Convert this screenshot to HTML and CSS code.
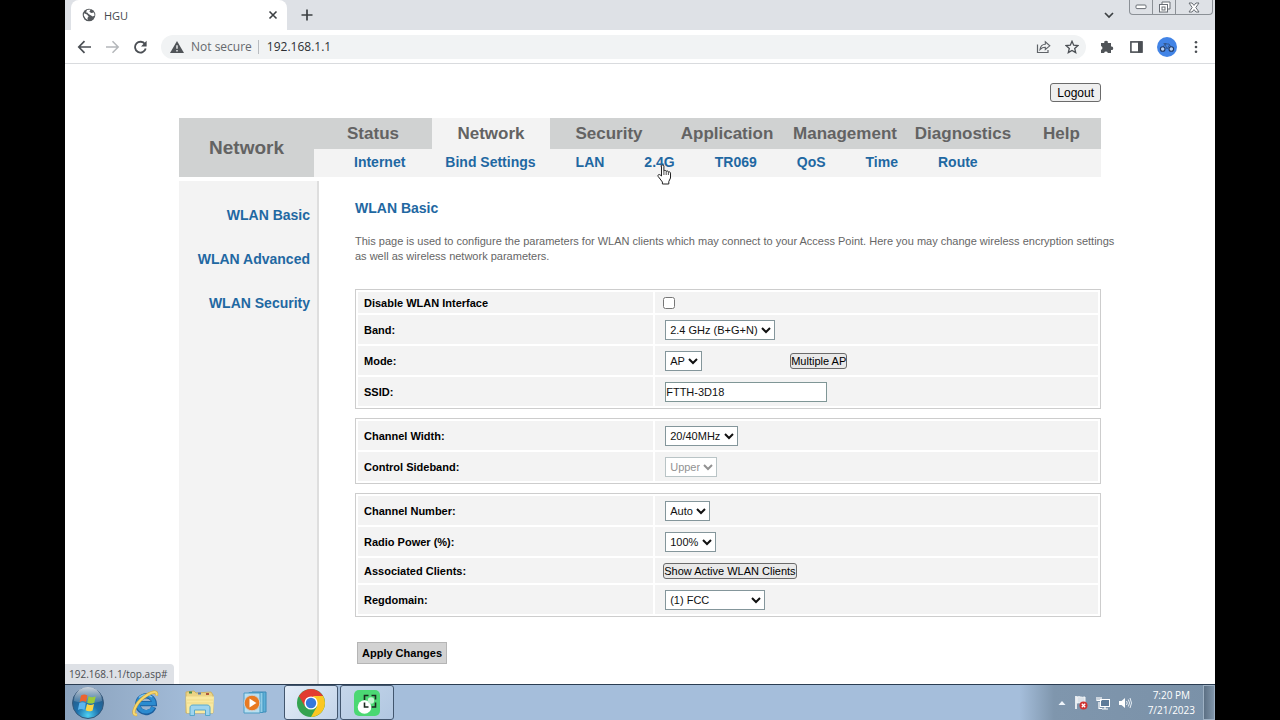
FILE: index.html
```html
<!DOCTYPE html>
<html lang="en">
<head>
    <meta charset="UTF-8">
    <meta name="viewport" content="width=device-width, initial-scale=1.0">
    <title>HGU</title>
    <link rel="stylesheet" href="styles.css">
</head>
<body>
    <div class="desktop">
        <!-- Tab strip -->
        <div class="tab-strip">
            <div class="tab">
                <svg width="14" height="14" viewBox="0 0 14 14"><circle cx="7" cy="7" r="6.3" fill="#54585c"/><path d="M2 5.2L5 6.6 6.6 8.4 5.4 10 5.8 12 3.6 10.6 1.8 7.6zM5 2L8.6 1.6 7.4 3.8 9.2 5 12 4.4 12.6 7.6 10.8 8.4 8.6 7.2 6.6 6 5.2 4.6 4 4.4z" fill="#fff"/></svg>
                <span class="tab-title">HGU</span>
                <button class="icon-btn" aria-label="Close tab">
                    <svg width="10" height="10" viewBox="0 0 10 10"><path d="M1.5 1.5l7 7M8.5 1.5l-7 7" stroke="#3c4043" stroke-width="1.6"/></svg>
                </button>
            </div>
            <button class="icon-btn new-tab" aria-label="New tab">
                <svg width="12" height="12" viewBox="0 0 12 12"><path d="M6 .5v11M.5 6h11" stroke="#3c4043" stroke-width="1.7"/></svg>
            </button>
            <button class="icon-btn tab-search" aria-label="Search tabs">
                <svg width="10" height="8" viewBox="0 0 10 8"><path d="M1 2l4 4 4-4" fill="none" stroke="#3c4043" stroke-width="1.7"/></svg>
            </button>
            <div class="window-buttons">
                <button aria-label="Minimize"><svg width="12" height="6" viewBox="0 0 12 6"><rect x="1" y="1" width="10" height="3.6" rx="1" fill="#fff" stroke="#696e75"/></svg></button>
                <button aria-label="Restore"><svg width="13" height="12" viewBox="0 0 13 12"><path d="M4 3V1h8v7h-2" fill="#fff" stroke="#696e75"/><rect x="1.5" y="3.5" width="8" height="7.5" fill="#fff" stroke="#696e75"/><rect x="4" y="6" width="3" height="3" fill="none" stroke="#696e75"/></svg></button>
                <button class="close" aria-label="Close"><svg width="12" height="11" viewBox="0 0 12 11"><path d="M1 1h3l2 2.4L8 1h3L7.8 5.500 11 10H8L6 7.6 4 10H1l3.2-4.5z" fill="#fff" stroke="#696e75"/></svg></button>
            </div>
        </div>

        <!-- Toolbar -->
        <div class="toolbar">
            <button class="icon-btn" aria-label="Back"><svg width="15" height="14" viewBox="0 0 15 14"><path d="M14 7H2M7.5 1.2L1.8 7l5.7 5.8" fill="none" stroke="#4b4f54" stroke-width="1.7"/></svg></button>
            <button class="icon-btn" aria-label="Forward"><svg width="15" height="14" viewBox="0 0 15 14"><path d="M1 7h12M7.5 1.2L13.2 7l-5.7 5.8" fill="none" stroke="#b4b7ba" stroke-width="1.5"/></svg></button>
            <button class="icon-btn" aria-label="Reload"><svg width="15" height="14" viewBox="0 0 15 14"><path d="M12 4.200A5.400 5.400 0 1 0 12.700 8.500" fill="none" stroke="#4b4f54" stroke-width="1.8"/><path d="M13.6.8v5.7H8z" fill="#4b4f54"/></svg></button>
            <div class="omnibox">
                <svg width="14" height="12" viewBox="0 0 14 12"><path d="M7 0l7 12H0z" fill="#505458"/><path d="M7 4.200v3.600M7 9v1.500" stroke="#f1f3f4" stroke-width="1.4"/></svg>
                <span class="not-secure">Not secure</span>
                <input type="text" class="address" aria-label="Address" value="192.168.1.1">
                <button class="icon-btn" aria-label="Share"><svg width="15" height="14" viewBox="0 0 15 14"><path d="M1.5 4.500v8h10.500V10" fill="none" stroke="#5f6368" stroke-width="1.2"/><path d="M4 9.500C4.500 6 6.500 4.300 9.300 4.200V1.800L13.800 5.800 9.300 9.500V7.200C7 7.200 5.400 8 4 9.500z" fill="none" stroke="#5f6368" stroke-width="1.1"/></svg></button>
                <button class="icon-btn" aria-label="Bookmark"><svg width="14" height="14" viewBox="0 0 14 14"><path d="M7 1.300l1.700 3.900 4.200.4-3.200 2.800 1 4.200L7 10.400l-3.700 2.200 1-4.200L1.100 5.600l4.200-.4z" fill="none" stroke="#4b4f54" stroke-width="1.3"/></svg></button>
            </div>
            <button class="icon-btn" aria-label="Extensions"><svg width="15" height="14" viewBox="0 0 15 14"><path d="M2 3h3.300a1.800 1.800 0 1 1 3.500 0H12v3.500a1.800 1.800 0 1 1 0 3.500v3H8.800a1.900 1.900 0 0 0-3.700 0H2V9.800a1.900 1.900 0 0 0 0-3.700z" fill="#505458"/></svg></button>
            <button class="icon-btn" aria-label="Side panel"><svg width="17" height="14" viewBox="0 0 17 14"><rect x="3.900" y="1.900" width="11" height="10.200" fill="#fff" stroke="#4b4f54" stroke-width="1.600"/><path d="M11 1.500h4.500v11H11z" fill="#4b4f54"/></svg></button>
            <button class="icon-btn" aria-label="Profile"><svg width="20" height="20" viewBox="0 0 20 20"><circle cx="10" cy="10" r="10" fill="#4284e6"/><path d="M5.500 11L8 7h4l3 4.500M8 7l2 5 2.500-4M6.500 6.500h3" fill="none" stroke="#31507f" stroke-width=".8"/><circle cx="5.7" cy="12" r="2.3" fill="#b5d0f5" stroke="#213963" stroke-width="1.1"/><circle cx="14.300" cy="12" r="2.3" fill="#b5d0f5" stroke="#213963" stroke-width="1.1"/></svg></button>
            <button class="icon-btn" aria-label="Menu"><svg width="12" height="14" viewBox="0 0 12 14"><g fill="#4b4f54"><circle cx="6" cy="2.200" r="1.300"/><circle cx="6" cy="7" r="1.300"/><circle cx="6" cy="11.800" r="1.300"/></g></svg></button>
        </div>

        <!-- Router page -->
        <div class="page">
            <div class="wrapper">
                <div class="top-bar">
                    <button class="logout">Logout</button>
                </div>

                <div class="header">
                    <div class="section-name">Network</div>
                    <div class="menus">
                        <nav class="main-menu">
                            <a href="#">Status</a>
                            <a href="#" class="active">Network</a>
                            <a href="#">Security</a>
                            <a href="#">Application</a>
                            <a href="#">Management</a>
                            <a href="#">Diagnostics</a>
                            <a href="#" class="last">Help</a>
                        </nav>
                        <nav class="sub-menu">
                            <a href="#">Internet</a>
                            <a href="#">Bind Settings</a>
                            <a href="#">LAN</a>
                            <a href="#">2.4G<svg class="pointer" width="16" height="21" viewBox="0 0 16 21"><path d="M4.500 12V2.200c0-1.800 2.400-1.800 2.400 0V7c.5-1 2.200-.8 2.300.4.700-.8 2.100-.4 2.200.7.800-.6 2.100-.1 2.100 1V14l-1.700 3.500V20H5.400v-2L1.200 12.500C.3 11 2 9.800 3.200 11z" fill="#fff" stroke="#222"/><path d="M6.900 7v4M9.200 7.500V11M11.400 8.200V11" stroke="#222" stroke-width=".8"/></svg></a>
                            <a href="#">TR069</a>
                            <a href="#">QoS</a>
                            <a href="#">Time</a>
                            <a href="#">Route</a>
                        </nav>
                    </div>
                </div>

                <div class="main">
                    <nav class="sidebar">
                        <a href="#">WLAN Basic</a>
                        <a href="#">WLAN Advanced</a>
                        <a href="#">WLAN Security</a>
                    </nav>

                    <div class="content">
                        <h1>WLAN Basic</h1>
                        <p class="intro">This page is used to configure the parameters for WLAN clients which may connect to your Access Point. Here you may change wireless encryption settings<br>as well as wireless network parameters.</p>

                        <table class="settings">
                            <tr class="short">
                                <th><label for="disable">Disable WLAN Interface</label></th>
                                <td><input type="checkbox" id="disable"></td>
                            </tr>
                            <tr>
                                <th><label for="band">Band:</label></th>
                                <td><select id="band"><option>2.4 GHz (B+G+N)</option></select></td>
                            </tr>
                            <tr>
                                <th><label for="mode">Mode:</label></th>
                                <td><select id="mode"><option>AP</option></select><button class="small-btn multiple">Multiple AP</button></td>
                            </tr>
                            <tr>
                                <th><label for="ssid">SSID:</label></th>
                                <td><input type="text" id="ssid" value="FTTH-3D18"></td>
                            </tr>
                        </table>

                        <table class="settings">
                            <tr>
                                <th><label for="width">Channel Width:</label></th>
                                <td><select id="width"><option>20/40MHz</option></select></td>
                            </tr>
                            <tr>
                                <th><label for="sideband">Control Sideband:</label></th>
                                <td><select id="sideband" disabled><option>Upper</option></select></td>
                            </tr>
                        </table>

                        <table class="settings">
                            <tr>
                                <th><label for="channel">Channel Number:</label></th>
                                <td><select id="channel"><option>Auto</option></select></td>
                            </tr>
                            <tr>
                                <th><label for="power">Radio Power (%):</label></th>
                                <td><select id="power"><option>100%</option></select></td>
                            </tr>
                            <tr class="medium">
                                <th><label for="clients">Associated Clients:</label></th>
                                <td><button class="small-btn" id="clients">Show Active WLAN Clients</button></td>
                            </tr>
                            <tr>
                                <th><label for="regdomain">Regdomain:</label></th>
                                <td><select id="regdomain" class="wide"><option>(1) FCC</option></select></td>
                            </tr>
                        </table>

                        <button class="apply">Apply Changes</button>
                    </div>
                </div>
            </div>
            <div class="status-bubble">192.168.1.1/top.asp#</div>
        </div>

        <!-- Taskbar -->
        <div class="taskbar">
            <button class="task start" aria-label="Start">
                <svg width="34" height="34" viewBox="0 0 34 34">
                    <defs>
                        <radialGradient id="orb" cx=".5" cy=".9" r=".9"><stop offset="0" stop-color="#4fd2f3"/><stop offset=".4" stop-color="#1d72ad"/><stop offset="1" stop-color="#2b4f75"/></radialGradient>
                        <linearGradient id="shine" x1="0" y1="0" x2="0" y2="1"><stop offset="0" stop-color="#fff" stop-opacity=".75"/><stop offset="1" stop-color="#fff" stop-opacity=".1"/></linearGradient>
                    </defs>
                    <circle cx="17" cy="17" r="15.500" fill="url(#orb)" stroke="#36587a"/>
                    <path d="M3 15a14 14 0 0 1 28 0c-9 3-18 3-28 0z" fill="url(#shine)"/>
                    <path d="M10 9.500c2.600-1.400 4.400-1.100 6.400.1l-1.400 6.400c-2-1.200-4.100-1.300-6.400-.1z" fill="#ed6430"/>
                    <path d="M17.600 10.300c2.400 1.200 4.600 1.200 7.200-.1l-1.500 6.500c-2.400 1.200-4.700 1.200-7.100 0z" fill="#9bcb3c"/>
                    <path d="M8.300 17.100c2.300-1.200 4.400-.9 6.500.2L13.400 24c-2-1.300-4.300-1.200-6.500-.1z" fill="#5db5ee"/>
                    <path d="M16 18c2.400 1.300 4.700 1.300 7 .1l-1.400 6.300c-2.400 1.200-4.700 1.200-7-.1z" fill="#fcd444"/>
                </svg>
            </button>
            <button class="task" aria-label="Internet Explorer">
                <svg width="28" height="28" viewBox="0 0 28 28"><path d="M22.800 18.200A8.300 8.300 0 1 1 23.300 14.600H9" fill="none" stroke="#1c5f9e" stroke-width="5.200"/><path d="M22.200 18.200A8.100 8.100 0 1 1 23 14.500H9" fill="none" stroke="#2b8bd0" stroke-width="3.600"/><path d="M8 8.500a9.500 9.500 0 0 1 13-.5" fill="none" stroke="#7cc2ee" stroke-width="1.500"/><path d="M6 25.500C-1 27 4.500 14.500 12.500 8.500S27 1 25.500 6.500" fill="none" stroke="#d2a83a" stroke-width="3.200"/><path d="M6 25.500C-1 27 4.500 14.500 12.500 8.500S27 1 25.500 6.500" fill="none" stroke="#f5d770" stroke-width="2"/></svg>
            </button>
            <button class="task" aria-label="Windows Explorer">
                <svg width="30" height="28" viewBox="0 0 30 28"><path d="M1 3l8-1 2 2 15-1 2 3v18H1z" fill="#ecd484" stroke="#cdb263"/><path d="M4 3.500h3" stroke="#3f8a4c" stroke-width="2"/><path d="M13 4.500h3" stroke="#5b76a8" stroke-width="2"/><path d="M21 5h3" stroke="#b0563c" stroke-width="2"/><path d="M1 7.500h28L28 24H2z" fill="#f9e9a0"/><path d="M2 11h26M2 14h26" stroke="#efd987"/><path d="M5 26.500V19c0-2 1-3 3-3h14c2 0 3 1 3 3v7.500h-4.500V21h-11v5.500z" fill="#9ed4ee" stroke="#57a7cb"/></svg>
            </button>
            <button class="task" aria-label="Media Player">
                <svg width="26" height="26" viewBox="0 0 26 26"><path d="M10 2h14v20H10z" fill="#5eb1d8" stroke="#3c8ab7"/><path d="M7 2.500h14v20H7z" fill="#8fcde8" stroke="#4294bf"/><path d="M2 3h16v20H2z" fill="#b8dff0" stroke="#4d9cc4"/><circle cx="10" cy="13" r="7.800" fill="#e97a21" stroke="#c9cfd3"/><path d="M7.500 8.500l7 4.500-7 4.500z" fill="#fff"/></svg>
            </button>
            <button class="task open" aria-label="Chrome">
                <svg width="30" height="30" viewBox="0 0 30 30"><circle cx="15" cy="15" r="14" fill="#34a350"/><path d="M15 15L2.900 8A14 14 0 0 1 27.100 8z" fill="#e23c30"/><path d="M2.900 8L9 18.500 15 8.500z" fill="#e23c30"/><path d="M27.100 8A14 14 0 0 1 15 29l6-10.500L17 8z" fill="#fbc722"/><circle cx="15" cy="15" r="6.600" fill="#fff"/><circle cx="15" cy="15" r="5.200" fill="#3478dc"/></svg>
            </button>
            <button class="task open" aria-label="Screen recorder">
                <svg width="28" height="28" viewBox="0 0 28 28"><rect x="1" y="1" width="26" height="26" rx="5" fill="#4bd873"/><path d="M11.500 11V6.500H15.500M18.500 6.500H22.500V10.500M22.500 13.500V18h-4" fill="none" stroke="#1b2b20" stroke-width="1.600"/><circle cx="11.500" cy="18" r="6.800" fill="#fff"/><circle cx="18" cy="11.500" r="3.200" fill="#c4f3d1"/><path d="M11.500 13.500V18H15.500" fill="none" stroke="#1b2b20" stroke-width="1.600"/></svg>
            </button>
            <div class="tray">
                <svg width="8" height="6" viewBox="0 0 8 6"><path d="M4 1l3.500 4h-7z" fill="#eef4fa"/></svg>
                <svg width="14" height="15" viewBox="0 0 14 15"><path d="M2 1v13" stroke="#fff" stroke-width="1.6"/><path d="M3 2c3-1 4 1 8 0v6c-4 1-5-1-8 0z" fill="#dce3ea" stroke="#f6f8fa"/><circle cx="9.500" cy="10.500" r="4" fill="#cf3331"/><path d="M7.800 8.800l3.400 3.400M11.200 8.800l-3.400 3.400" stroke="#fff" stroke-width="1.3"/></svg>
                <svg width="14" height="14" viewBox="0 0 14 14"><rect x="4.500" y="3.500" width="9" height="7" fill="#5f7c99" stroke="#fff"/><path d="M6 13h6M9 11v2M3 6v6.500h3M1 1v3.500h4V1M3 1v3" fill="none" stroke="#fff" stroke-width="1.2"/></svg>
                <svg width="14" height="14" viewBox="0 0 14 14"><path d="M1 5h2.500L7 2v10L3.500 9H1z" fill="#fff"/><path d="M8.500 5q1.500 2 0 4M10.300 3.500q2.500 3.500 0 7M12 2q3 5 0 10" fill="none" stroke="#e7eef5"/></svg>
                <div class="clock">
                    <div>7:20 PM</div>
                    <div>7/21/2023</div>
                </div>
            </div>
            <button class="show-desktop" aria-label="Show desktop"></button>
        </div>
    </div>
</body>
</html>
```
FILE: styles.css
```css
:root {
    --blue: #1f68a2;
    --gray-text: #636363;
    --bar: #d0d2d2;
    --panel: #f3f3f3;
}

* {
    box-sizing: border-box;
}

body {
    margin: 0;
    background-color: #000;
    font-family: "Liberation Sans", Arial, sans-serif;
    font-size: 11px;
    color: #000;
}

a {
    text-decoration: none;
}

svg {
    display: block;
    flex: none;
}

button {
    font-family: inherit;
}

.desktop {
    display: flex;
    flex-direction: column;
    height: 100vh;
    margin: 0 65px;
    background: #fff;
}

.icon-btn {
    display: flex;
    padding: 0;
    border: none;
    background: none;
}

/* Browser window */
.tab-strip {
    display: flex;
    align-items: center;
    height: 30px;
    flex: none;
    padding-left: 6px;
    background: #dee1e6;
}

.tab {
    display: flex;
    align-items: center;
    width: 216px;
    height: 30px;
    padding: 0 9px 0 11px;
    border-radius: 8px 8px 0 0;
    background: #fff;
}

.tab-title {
    flex: 1;
    margin-left: 8px;
    font-family: "Open Sans", "Noto Sans", sans-serif;
    font-size: 11px;
    color: #45494d;
}

.new-tab {
    margin-left: 14px;
}

.tab-search {
    margin-left: auto;
}

.window-buttons {
    display: flex;
    align-self: flex-start;
    height: 15px;
    margin: 0 2px 0 15px;
    border: 1px solid #8b9096;
    border-top: none;
    border-radius: 0 0 4px 4px;
}

.window-buttons button {
    display: flex;
    align-items: center;
    justify-content: center;
    width: 23px;
    padding: 0;
    border: none;
    border-right: 1px solid #8b9096;
    background: none;
}

.window-buttons .close {
    width: 36px;
    border-right: none;
}

.toolbar {
    display: flex;
    align-items: center;
    gap: 13px;
    height: 34px;
    flex: none;
    padding: 0 13px 0 12px;
    border-bottom: 1px solid #d9dbde;
}

.omnibox {
    display: flex;
    align-items: center;
    flex: 1;
    height: 24px;
    padding: 0 7px 0 9px;
    gap: 14px;
    border-radius: 12px;
    background: #f1f3f4;
    font-family: "Open Sans", "Noto Sans", sans-serif;
    font-size: 12px;
}

.not-secure {
    margin-left: -7px;
    padding-right: 6px;
    border-right: 1px solid #b9bcc0;
    line-height: 14px;
    color: #65696e;
}

.address {
    flex: 1;
    margin-left: -6px;
    padding: 0;
    border: none;
    background: none;
    font: inherit;
    color: #2c2f33;
}

.page {
    position: relative;
    flex: 1;
    min-height: 0;
    overflow: hidden;
}

.status-bubble {
    position: absolute;
    left: 0;
    bottom: 0;
    padding: 0 6px 0 4px;
    border-radius: 0 4px 0 0;
    background: #dee1e6;
    font-family: "Open Sans", "Noto Sans", sans-serif;
    font-size: 10px;
    line-height: 20px;
    color: #4a4d51;
}

/* Router page */
.wrapper {
    display: flex;
    flex-direction: column;
    max-width: 922px;
    height: 100%;
    margin: 0 auto;
}

.top-bar {
    display: flex;
    justify-content: flex-end;
    padding: 19px 0 16px;
}

.logout {
    height: 19px;
    padding: 0 6px;
    border: 1px solid #6b6b6b;
    border-radius: 3px;
    background: #efefef;
    font-size: 12px;
}

.header {
    display: flex;
}

.section-name {
    flex: 0 0 135px;
    background: var(--bar);
    color: var(--gray-text);
    font-size: 19px;
    font-weight: bold;
    line-height: 59px;
    text-align: center;
}

.menus {
    flex: 1;
    background: var(--panel);
}

.main-menu {
    display: flex;
    background: var(--bar);
    font-size: 17px;
    font-weight: bold;
    line-height: 31px;
    text-align: center;
}

.main-menu a {
    width: 118px;
    color: var(--gray-text);
}

.main-menu .active {
    background: var(--panel);
}

.main-menu .last {
    width: auto;
    flex: 1;
}

.sub-menu {
    display: flex;
    gap: 40px;
    padding: 0 0 2px 40px;
    font-size: 14px;
    font-weight: bold;
    line-height: 26px;
}

.sub-menu a {
    position: relative;
    color: var(--blue);
}

.pointer {
    position: absolute;
    left: 13px;
    top: 15px;
}

.main {
    display: flex;
    flex: 1;
    margin-top: 4px;
}

.sidebar {
    flex: 0 0 140px;
    padding: 12px 7px 0 0;
    border-right: 2px solid #dedede;
    background: var(--panel);
    text-align: right;
}

.sidebar a {
    display: block;
    font-size: 14px;
    font-weight: bold;
    line-height: 44px;
    color: var(--blue);
}

.content {
    flex: 1;
    min-width: 0;
    padding: 18px 0 0 36px;
}

h1 {
    margin: 0 0 17px;
    font-size: 14px;
    line-height: 18px;
    color: var(--blue);
}

.intro {
    margin: 0 0 25px;
    line-height: 15px;
    white-space: nowrap;
    color: #666;
}

.settings {
    width: 100%;
    margin-bottom: 9px;
    border: 1px solid #cdcdcd;
    border-spacing: 2px;
    table-layout: fixed;
}

.settings tr {
    height: 29px;
}

.settings .short {
    height: 21px;
}

.settings .medium {
    height: 25px;
}

.settings th,
.settings td {
    padding: 0 6px;
    background: var(--panel);
    text-align: left;
    vertical-align: middle;
}

.settings td {
    padding: 0 8px;
}

.settings th {
    width: 40%;
}

.settings input,
.settings select {
    vertical-align: middle;
    font-family: inherit;
    font-size: 11px;
}

.settings input[type="checkbox"] {
    display: block;
    width: 12px;
    height: 12px;
    margin: 0;
}

.settings select {
    height: 20px;
    margin: 0 2px;
    border: 1px solid #84969b;
    border-radius: 0;
    background-color: #fff;
    color: #111;
}

.settings select:disabled {
    border-color: #b9c4c6;
    color: #929292;
    opacity: 1;
}

.settings .wide {
    width: 100px;
}

.settings input[type="text"] {
    width: 162px;
    height: 20px;
    margin: 0 2px;
    padding: 0;
    border: 1px solid #7f9696;
    color: #111;
}

.small-btn {
    height: 16px;
    padding: 0;
    border: 1px solid #6b6b6b;
    border-radius: 3px;
    background: #e9e9e9;
    font-size: 11px;
    line-height: 14px;
    vertical-align: middle;
}

.multiple {
    margin-left: 86px;
}

.apply {
    height: 22px;
    margin: 16px 2px 0;
    padding: 0 4px;
    border: 1px solid #b5b5b5;
    background: #d2d2d2;
    font-size: 11px;
    font-weight: bold;
}

/* Taskbar */
.taskbar {
    display: flex;
    align-items: stretch;
    height: 36px;
    flex: none;
    border-top: 1px solid #2b3d52;
    background: linear-gradient(90deg, #8aa2bd, #a5bedb 12%, #a5bedb 83%, #7f96ad 86%, #7a91a8);
}

.task {
    display: flex;
    align-items: center;
    justify-content: center;
    width: 55px;
    padding: 0;
    border: none;
    background: none;
}

.start {
    width: 52px;
    padding-right: 6px;
}

.open {
    width: 54px;
    margin-left: 2px;
    border: 1px solid #42566e;
    border-radius: 3px;
    background: linear-gradient(135deg, #e4edf8, #c3d4e9);
}

.open + .open {
    background: linear-gradient(135deg, #c5d6ea, #b1c7e1);
}

.tray {
    display: flex;
    align-items: center;
    gap: 8px;
    margin-left: auto;
    color: #fff;
}

.clock {
    margin: 0 8px;
    font-family: "Open Sans", "Noto Sans", sans-serif;
    font-size: 10px;
    line-height: 15px;
    text-align: center;
}

.show-desktop {
    width: 12px;
    padding: 0;
    border: 1px solid #9db0c3;
    background: linear-gradient(90deg, #5c7084, #8095aa);
}
```
